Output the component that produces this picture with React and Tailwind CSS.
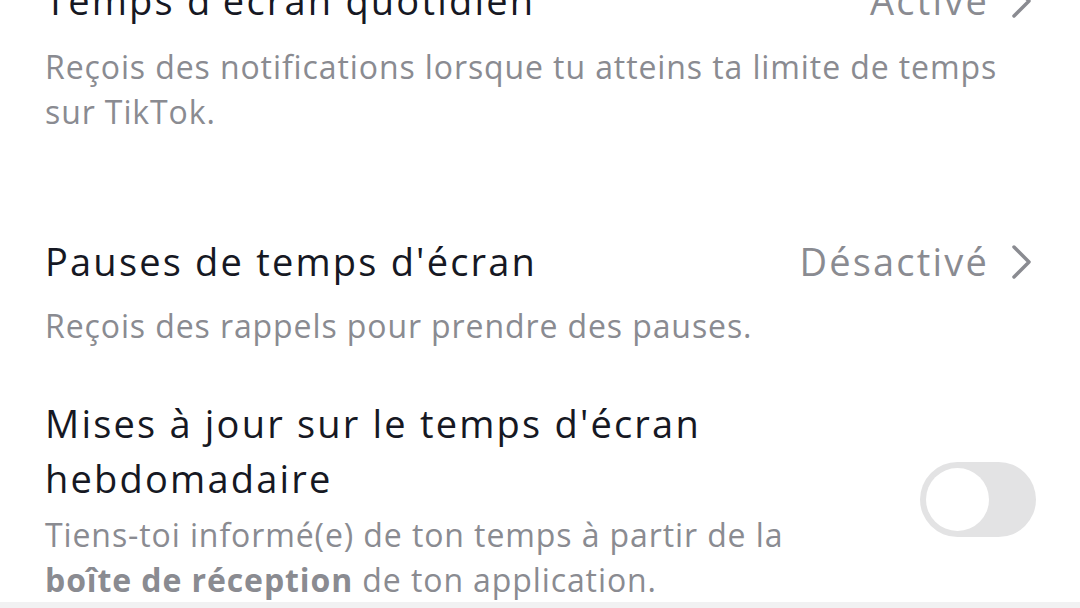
import { useState } from "react";

const font = { fontFamily: "'Open Sans', Lato, sans-serif" };

const Chevron = () => (
  <svg width="22" height="36" viewBox="0 0 22 36" fill="none" className="ml-[22px]">
    <path d="M3 3l15 15L3 33" stroke="#8a8b91" strokeWidth="3.5" strokeLinecap="round" strokeLinejoin="round" />
  </svg>
);

const SettingRow = ({ title, value, children, className = "" }) => (
  <div className={`px-[45px] ${className}`}>
    <div className="flex items-center justify-between">
      <div className="text-[38px] leading-[55px] tracking-[2.2px] text-[#161823]">{title}</div>
      <div className="flex items-center pr-[2px]">
        <span className="text-[38px] leading-[55px] tracking-[2.2px] text-[#8a8b91]">{value}</span>
        <Chevron />
      </div>
    </div>
    <div className="text-[32px] leading-[45px] tracking-[0.9px] text-[#8a8b91]">{children}</div>
  </div>
);

const App = () => {
  const [weekly, setWeekly] = useState(false);

  return (
    <div className="w-[1080px] h-[608px] overflow-hidden bg-white flex flex-col" style={font}>
      {/* Daily screen time */}
      <SettingRow title="Temps d'écran quotidien" value="Activé" className="-mt-[27px]">
        <p className="mt-[16px]">
          Reçois des notifications lorsque tu atteins ta limite de temps
          <br />
          sur TikTok.
        </p>
      </SettingRow>

      {/* Screen time breaks */}
      <SettingRow title="Pauses de temps d'écran" value="Désactivé" className="mt-[100px]">
        <p className="mt-[14px]">Reçois des rappels pour prendre des pauses.</p>
      </SettingRow>

      {/* Weekly updates */}
      <div className="mt-[48px] pl-[45px] pr-[44px] flex items-center justify-between">
        <div>
          <div className="text-[38px] leading-[55px] tracking-[2.2px] text-[#161823]">
            Mises à jour sur le temps d'écran
            <br />
            hebdomadaire
          </div>
          <p className="mt-[6px] text-[32px] leading-[45px] tracking-[0.9px] text-[#8a8b91]">
            Tiens-toi informé(e) de ton temps à partir de la
            <br />
            <span className="font-bold">boîte de réception</span> de ton application.
          </p>
        </div>
        <button
          onClick={() => setWeekly(!weekly)}
          className={`w-[116px] h-[75px] rounded-full p-[6px] flex ${weekly ? "bg-[#20d5ec] justify-end" : "bg-[#e3e3e4] justify-start"}`}
        >
          <span className="w-[63px] h-[63px] rounded-full bg-white block" />
        </button>
      </div>

      <div className="mt-auto h-[6px] bg-[#f1f1f2]" />
    </div>
  );
};

export default App;
